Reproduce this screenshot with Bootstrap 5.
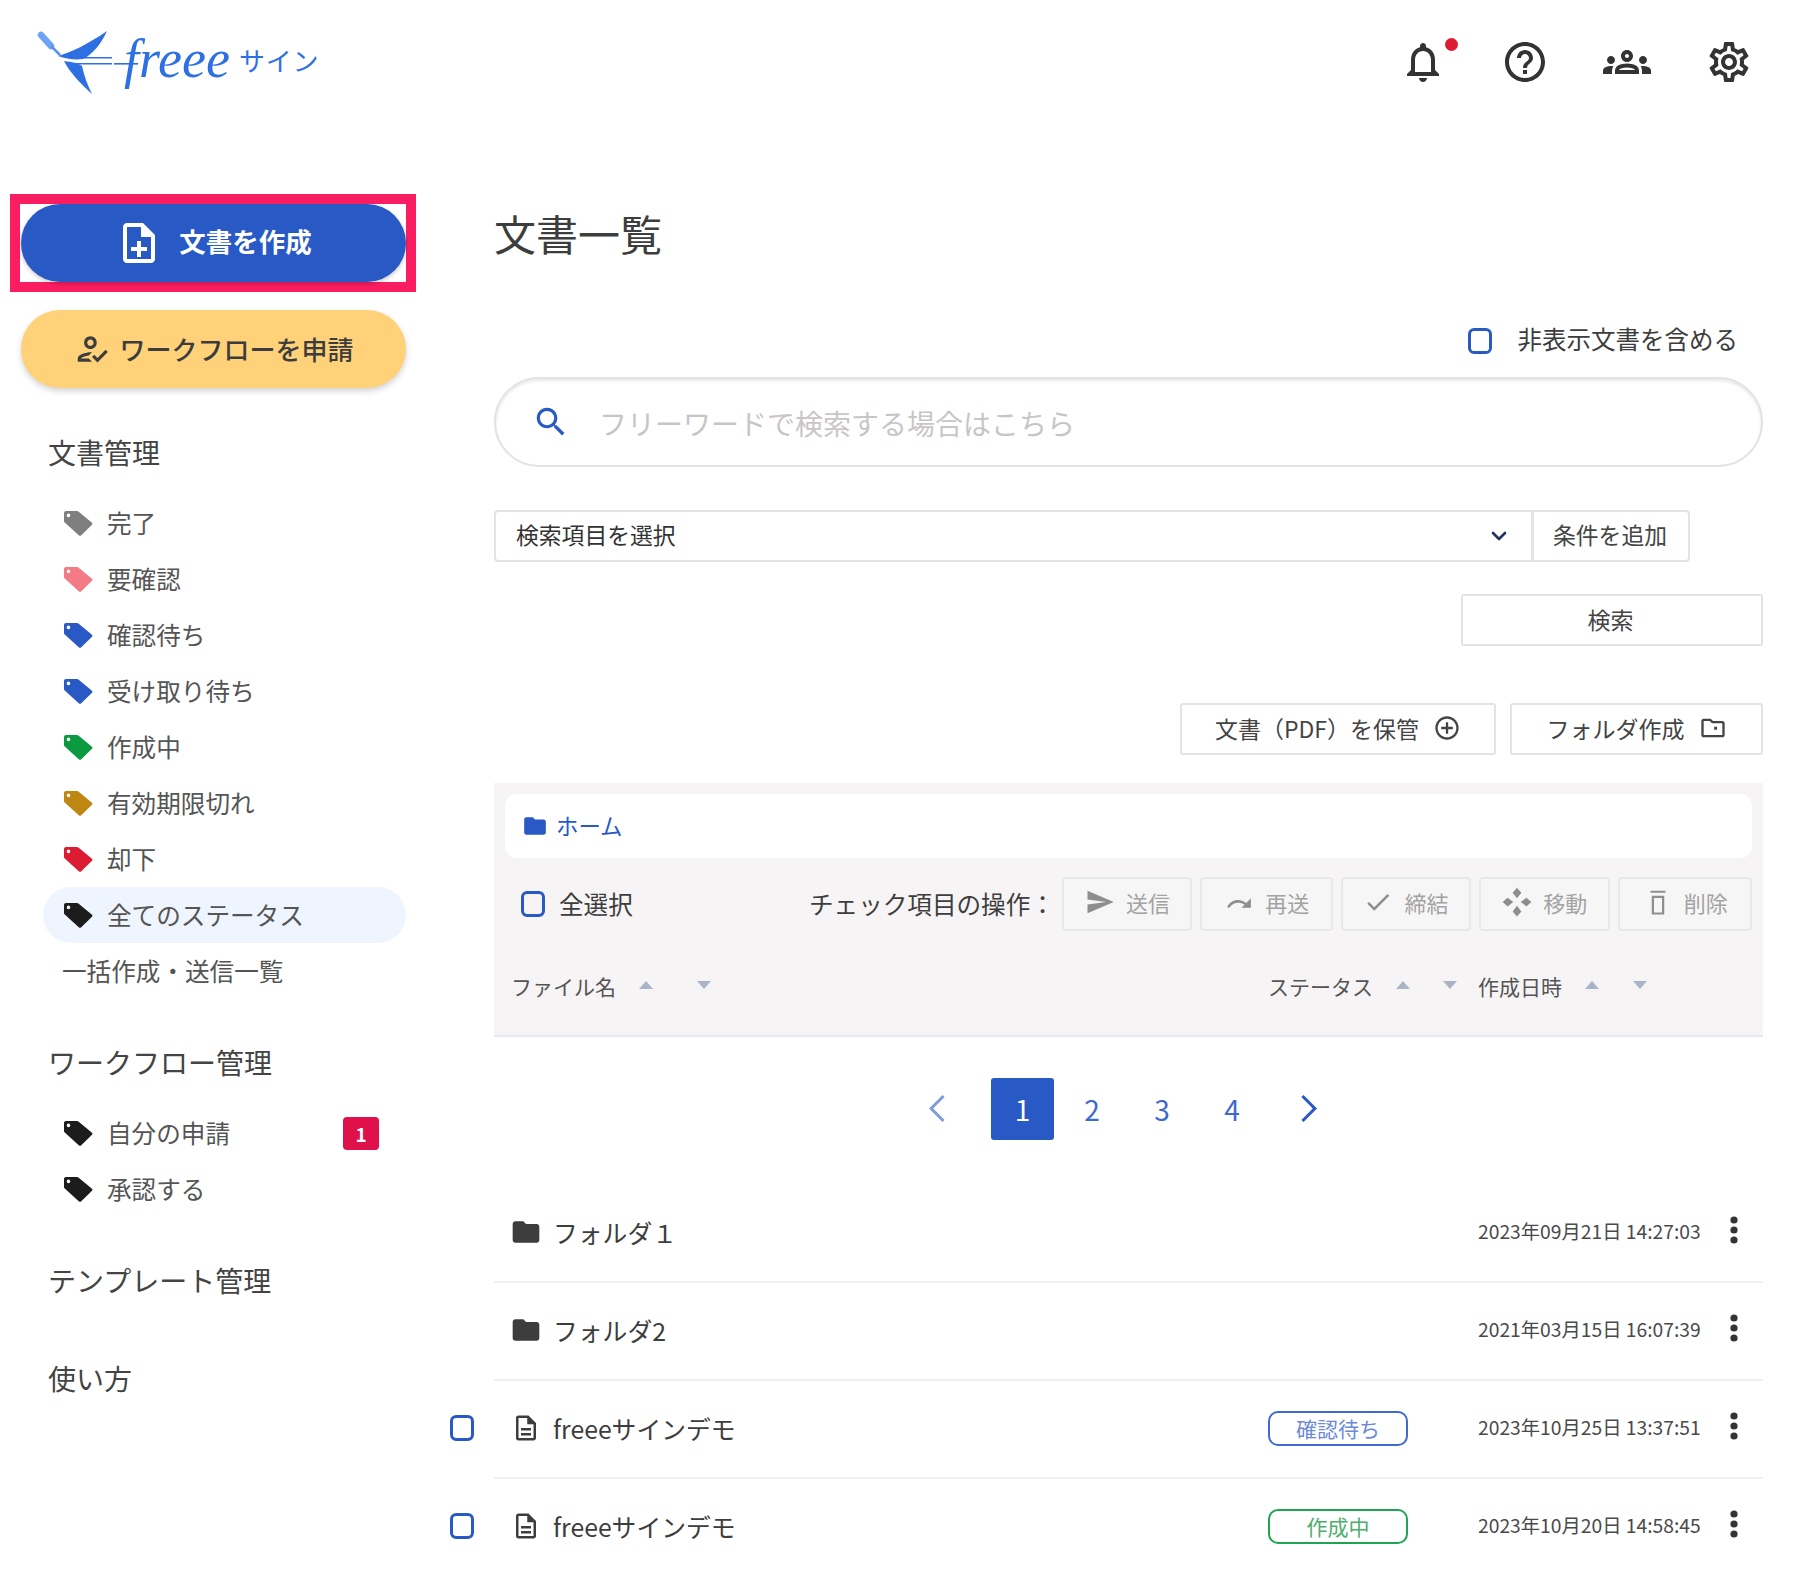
<!DOCTYPE html>
<html lang="ja">
<head>
<meta charset="utf-8">
<title>freeeサイン</title>
<link href="https://cdn.jsdelivr.net/npm/bootstrap@5.3.0/dist/css/bootstrap.min.css" rel="stylesheet">
<style>
html,body{height:1570px;overflow:hidden;background:#fff}
body{font-family:"Noto Sans CJK JP","Noto Sans",sans-serif;color:#3d3d3d;font-size:24.6px;line-height:1.4}
svg{fill:currentColor;flex-shrink:0;display:block}
.app-head{height:130px;padding:30px 53px 0 38px}
.logo-mark{width:82px;height:66px;color:#2f6fe4;overflow:visible}
.logo-free{font-family:"Liberation Serif",serif;font-style:italic;font-size:54px;color:#2f6fe4;line-height:1;margin-left:4px;margin-top:-8px}
.logo-sign{font-size:26px;color:#2f6fe4;letter-spacing:.8px;margin-left:9px;margin-top:-6px}
.head-icons{gap:54px;margin-top:8px}
.head-ico{width:48px;height:48px;color:#333}
.head-ico svg{width:48px;height:48px}
.bell-dot{top:0;right:-11px;width:13px;height:13px;background:#dc1c33}
.side{width:450px;flex-shrink:0}
.hl{margin:64px 0 0 10px;width:406px;height:98px;border:10px solid #fb1d62;background:#fff}
.cta{border:0;height:78px;font-size:26px;display:flex;align-items:center;justify-content:center}
.cta-blue{background:#2859c5;color:#fff;font-weight:700;width:385px;margin-left:1px;gap:16px;box-shadow:0 2px 4px rgba(0,0,0,.2);font-size:26.5px}
.cta-blue span{margin-bottom:4px}
.cta-blue:hover{background:#2859c5;color:#fff}
.cta-yellow{background:#ffd27a;color:#3d3d3d;width:385px;margin:18px 0 0 21px;gap:8px;font-weight:500;box-shadow:0 3px 6px rgba(0,0,0,.18)}
.cta-yellow span{margin-bottom:2px}
.cta-yellow:hover{background:#ffd27a;color:#3d3d3d}
.sec{font-size:28px;line-height:40px;margin-left:48px;color:#444;text-decoration:none;display:block}
.s1{margin-top:44px}.s2{margin-top:43px}.s3{margin-top:43px}.s4{margin-top:58px}
.side-nav{margin-left:43px;width:363px;margin-top:23px}
.side-nav.n2{margin-top:23px}
.side-nav .nav-link{height:56px;padding:0 0 2px 21px;color:#555;font-size:24.6px;display:flex;align-items:center;border-radius:28px;gap:14px}
.side-nav .nav-link.active{background:#eff5fe;color:#555}
.side-nav .plain{padding-left:19px}
.tag{width:29px;height:25px;margin-top:2px}
.c-grey{color:#7f7f7f}.c-pink{color:#f47a85}.c-blue{color:#2859c5}.c-green{color:#0b9a40}.c-gold{color:#bd8712}.c-red{color:#dc1c33}.c-black{color:#1c1c1c}
.cnt{width:36px;height:33px;background:#e0104a;color:#fff;font-size:19px;font-weight:700;border-radius:4px;margin:2px 27px 0 auto;padding:0;display:flex;align-items:center;justify-content:center}
.main{width:1313px;flex-shrink:0}
.in{margin-left:44px}
.ttl{font-size:42px;line-height:60px;font-weight:400;margin:73px 0 0;color:#3d3d3d}
.hide-row{margin-top:63px;height:30px;padding-right:25px;gap:26px;line-height:30px;font-size:24.5px}
.hide-row span{margin-bottom:4px}
.cb{width:24px;height:26px;margin:0;border:3px solid #2859c5;border-radius:3px;background:transparent;flex-shrink:0}
.search{margin-top:21px;height:90px;border:2px solid #e3e3e3;box-shadow:inset 0 2px 3px rgba(0,0,0,.09);padding-left:36px;gap:29px;color:#2859c5}
.search svg{width:38px;height:38px}
.search .form-control{border:0;box-shadow:none;background:transparent;font-size:28px;padding:1px 0 0;height:60px}
.search .form-control::placeholder{color:#c9c5c5}
.pick{margin-top:43px;width:1196px;height:52px}
.pick .form-select{font-size:22.8px;color:#333;border:2px solid #e3e3e3;height:52px;padding:0 0 2px 20px;background-image:url("data:image/svg+xml,%3csvg xmlns='http://www.w3.org/2000/svg' viewBox='0 0 16 16'%3e%3cpath fill='none' stroke='%231f3560' stroke-linecap='round' stroke-linejoin='round' stroke-width='2.600' d='m2 5 6 6 6-6'/%3e%3c/svg%3e");background-position:right 22px center;background-size:20px 16px;border-radius:4px 0 0 4px;line-height:46px}
.pick .btn{width:158px;font-size:22.8px;border:2px solid #e3e3e3;color:#444;border-radius:0 4px 4px 0;margin-left:-2px;padding:0 2px 2px 0}
.wbtn{height:52px;border:2px solid #e3e3e3;border-radius:3px;font-size:23px;color:#444;padding:0 0 2px;display:flex;align-items:center;justify-content:center;background:#fff}
.w-search{width:302px;margin:32px 0 0 auto;padding-right:3px}
.tools{margin-top:57px;gap:14px}
.w-pdf{width:316px;gap:14px}.w-folder{width:253px;gap:14px}
.wbtn svg{width:28px;height:28px}
.panel{margin-top:28px;height:254px;background:#f6f4f5;border-bottom:2px solid #e6eaee;padding:11px 11px 0 11px}
.crumb{height:64px;background:#fff;border-radius:12px;padding-left:17px;gap:8px;color:#2859c5;font-size:22.4px}
.crumb span{margin-bottom:1px}
.crumb svg{width:26px;height:26px}
.ops{margin-top:19px;height:54px;padding-left:16px}
.ops .lbl{margin-left:14px;margin-bottom:2px}
.ops .hint{margin-left:auto;margin-right:7.500px;margin-bottom:2px}
.act{height:54px;border:2px solid #e9e8e8;border-radius:4px;color:#a3a3a3;font-size:22px;display:flex;align-items:center;justify-content:center;gap:11px;padding:0 0 4px;background:#f7f6f6}
.act:nth-child(1),.act:nth-child(3){flex:0 0 130px}
.act:nth-child(2){flex:0 0 132.500px}
.act:nth-child(4){flex:0 0 131.500px}
.act:nth-child(5){flex:0 0 133.600px}
.act svg{width:30px;height:30px;color:#8e8e8e}
.act-set{gap:8px}
.cols{display:grid;grid-template-columns:757px 210px 1fr;margin-top:36px;height:40px;align-items:center;padding-left:6px;font-size:21px;color:#555}
.tri-u,.tri-d{width:0;height:0;border-left:7px solid transparent;border-right:7px solid transparent;flex-shrink:0;margin-top:-3px}
.tri-u{border-bottom:8px solid #a9b5c7}
.tri-d{border-top:8px solid #a9b5c7}
.gap-a{margin-left:23px}.gap-b{margin-left:44px}.gap-c{margin-left:33px}.gap-d{margin-left:34px}
.pager{margin:41px 0 0 412px;height:62px}
.pager .page-link{width:63px;height:62px;border:0;background:transparent;color:#3f69cc;font-size:28px;padding:2px 0 0;display:flex;align-items:center;justify-content:center;border-radius:3px!important}
.pager .active .page-link{background:#2859c5;color:#fff}
.pager svg{width:36px;height:36px}
.pg-1{margin-right:23px}.pg-2{margin-right:7.500px}.pg-3{margin-right:8px}.pg-5{margin-left:14px}
.list{margin-top:45px}
.li-row{height:98px}
.chk{width:44px;flex-shrink:0;margin-top:-4px}
.body{flex-grow:1;height:98px;border-bottom:2px solid #edf0f4;padding-left:18px;display:grid;grid-template-columns:756px 210px 222px 1fr;align-items:center}
.nm{gap:12px;font-size:24.8px;color:#3d3d3d;margin-bottom:2px}
.nm svg{width:28px;height:28px}
.nm .ic-folder{width:32px;height:32px;margin-left:-2px;margin-right:-1px}
.nm .ic-doc{width:30px;height:30px;margin-left:-1px}
.st-cell{margin-bottom:2px}
.st{width:140px;height:35px;border:2px solid;border-radius:10px;background:#fff;font-size:21px;font-weight:400;padding:0;display:flex;align-items:center;justify-content:center;line-height:1}
.st-blue{color:#6c8ad8;border-color:#3f6ad2}
.st-green{color:#4fae6c;border-color:#1fa552}
.dt{font-size:19.3px;color:#4a4a4a;white-space:nowrap;margin-bottom:2px}
.keb{width:24px;height:30px;margin-left:22px;margin-top:-6px;color:#333}
</style>
</head>
<body>
<header class="app-head d-flex justify-content-between align-items-start">
  <a href="#" class="d-flex align-items-center text-decoration-none">
    <svg class="logo-mark" viewBox="0 0 82 66" aria-hidden="true">
      <path d="M3 5l10 11" stroke="#6ea3f7" stroke-width="6.500" stroke-linecap="round" fill="none"/>
      <path d="M13 16l9 9" stroke="#5b8ff0" stroke-width="2.500" fill="none"/>
      <path d="M20 26C34 22 50 14 69 1 63 14 55 24 45 29 37 30 28 29 20 26z"/>
      <path d="M26 31c8 1 14 2 18 5 2 9 5 18 10 28C44 55 32 43 26 31z"/>
      <path d="M36 27h38v1.600H38zM38 33h36v1.600H38z"/>
      <path d="M76 33h24v1.600H76z"/>
    </svg>
    <span class="logo-free">freee</span>
    <span class="logo-sign">サイン</span>
  </a>
  <div class="d-flex head-icons">
    <div class="head-ico position-relative">
      <svg viewBox="0 0 24 24"><path d="M12 22c1.100 0 2-.9 2-2h-4c0 1.100.9 2 2 2zm6-6v-5c0-3.070-1.630-5.640-4.500-6.320V4c0-.83-.67-1.500-1.500-1.500s-1.500.67-1.500 1.500v.68C7.640 5.360 6 7.920 6 11v5l-2 2v1h16v-1l-2-2zm-2 1H8v-6c0-2.480 1.510-4.500 4-4.500s4 2.020 4 4.500v6z"/></svg>
      <span class="bell-dot position-absolute rounded-circle"></span>
    </div>
    <div class="head-ico"><svg viewBox="0 0 24 24"><path d="M11 18h2v-2h-2v2zm1-16C6.480 2 2 6.480 2 12s4.480 10 10 10 10-4.480 10-10S17.520 2 12 2zm0 18c-4.410 0-8-3.590-8-8s3.590-8 8-8 8 3.590 8 8-3.590 8-8 8zm0-14c-2.210 0-4 1.790-4 4h2c0-1.100.9-2 2-2s2 .9 2 2c0 2-3 1.750-3 5h2c0-2.250 3-2.500 3-5 0-2.210-1.790-4-4-4z"/></svg></div>
    <div class="head-ico"><svg viewBox="0 0 24 24"><path d="M4 13c1.100 0 2-.9 2-2s-.9-2-2-2-2 .9-2 2 .9 2 2 2zm1.130 1.100c-.37-.06-.74-.1-1.130-.1-.99 0-1.930.21-2.780.58C.48 14.900 0 15.620 0 16.430V18h4.500v-1.610c0-.83.23-1.610.63-2.290zM20 13c1.100 0 2-.9 2-2s-.9-2-2-2-2 .9-2 2 .9 2 2 2zm4 3.430c0-.81-.48-1.530-1.220-1.850-.85-.37-1.790-.58-2.780-.58-.39 0-.76.04-1.130.1.4.68.63 1.460.63 2.290V18H24v-1.570zm-7.760-2.780c-1.170-.52-2.610-.9-4.240-.9-1.630 0-3.070.39-4.240.9C6.680 14.130 6 15.210 6 16.390V18h12v-1.610c0-1.180-.68-2.260-1.760-2.740zM8.070 16c.09-.23.13-.39.91-.69.97-.38 1.990-.56 3.020-.56s2.050.18 3.020.56c.77.3.81.46.91.69H8.070zM12 8c.55 0 1 .45 1 1s-.45 1-1 1-1-.45-1-1 .45-1 1-1m0-2c-1.660 0-3 1.340-3 3s1.340 3 3 3 3-1.340 3-3-1.340-3-3-3z"/></svg></div>
    <div class="head-ico"><svg viewBox="0 0 24 24"><path d="M19.430 12.980c.04-.32.07-.64.07-.98 0-.34-.03-.66-.07-.98l2.110-1.650c.19-.15.24-.42.12-.64l-2-3.460c-.09-.16-.26-.25-.44-.25-.06 0-.12.01-.17.03l-2.490 1c-.52-.4-1.080-.73-1.690-.98l-.38-2.650C14.460 2.180 14.250 2 14 2h-4c-.25 0-.46.18-.49.42l-.38 2.650c-.61.25-1.170.59-1.690.98l-2.490-1c-.06-.02-.12-.03-.18-.03-.17 0-.34.09-.43.25l-2 3.460c-.13.22-.07.49.12.64l2.110 1.650c-.04.32-.07.65-.07.98 0 .33.03.66.07.98l-2.110 1.650c-.19.15-.24.42-.12.64l2 3.460c.09.16.26.25.44.25.06 0 .12-.01.17-.03l2.490-1c.52.4 1.080.73 1.690.98l.38 2.650c.03.24.24.42.49.42h4c.25 0 .46-.18.49-.42l.38-2.650c.61-.25 1.170-.59 1.690-.98l2.490 1c.06.02.12.03.18.03.17 0 .34-.09.43-.25l2-3.460c.12-.22.07-.49-.12-.64l-2.110-1.650zm-1.980-1.710c.04.31.05.52.05.73 0 .21-.02.43-.05.73l-.14 1.130.89.7 1.080.84-.7 1.210-1.270-.51-1.040-.42-.9.68c-.43.32-.84.56-1.250.73l-1.060.43-.16 1.130-.2 1.350h-1.400l-.19-1.350-.16-1.130-1.060-.43c-.43-.18-.83-.41-1.230-.71l-.91-.7-1.060.43-1.270.51-.7-1.210 1.080-.84.89-.7-.14-1.130c-.03-.31-.05-.54-.05-.74s.02-.43.05-.73l.14-1.130-.89-.7-1.080-.84.7-1.210 1.270.51 1.040.42.9-.68c.43-.32.84-.56 1.250-.73l1.060-.43.16-1.130.2-1.350h1.390l.19 1.350.16 1.130 1.060.43c.43.18.83.41 1.230.71l.91.7 1.060-.43 1.270-.51.7 1.210-1.070.85-.89.7.14 1.130zM12 8c-2.210 0-4 1.790-4 4s1.790 4 4 4 4-1.790 4-4-1.790-4-4-4zm0 6c-1.100 0-2-.9-2-2s.9-2 2-2 2 .9 2 2-.9 2-2 2z"/></svg></div>
  </div>
</header>

<svg width="0" height="0" class="position-absolute"><defs>
  <symbol id="tag" viewBox="0 0 29 25"><path fill-rule="evenodd" d="M2 0h11c.6 0 1 .2 1.400.6L28 11.800c.6.600.6 1.400 0 2L17 24.400c-.6.600-1.400.6-2 0L.8 11.600C.3 11.200 0 10.700 0 10V2C0 .9.900 0 2 0zm2.500 2.600a1.800 1.800 0 1 0 0 3.600 1.800 1.800 0 0 0 0-3.600z"/></symbol>
</defs></svg>

<div class="d-flex">
  <aside class="side">
    <div class="hl">
      <button type="button" class="btn rounded-pill cta cta-blue">
        <svg width="48" height="48" viewBox="0 0 24 24"><path d="M13 11h-2v3H8v2h3v3h2v-3h3v-2h-3zm1-9H6c-1.100 0-2 .9-2 2v16c0 1.100.89 2 1.990 2H18c1.100 0 2-.9 2-2V8l-6-6zm4 18H6V4h7v5h5v11z"/></svg>
        <span>文書を作成</span>
      </button>
    </div>
    <button type="button" class="btn rounded-pill cta cta-yellow">
      <svg width="38" height="38" viewBox="0 0 24 24"><path d="M11 12c2.210 0 4-1.790 4-4s-1.790-4-4-4-4 1.790-4 4 1.790 4 4 4zm0-6c1.100 0 2 .9 2 2s-.9 2-2 2-2-.9-2-2 .9-2 2-2zM5 18c.2-.63 2.570-1.680 4.960-1.940l2.040-2c-.39-.04-.68-.06-1-.06-2.670 0-8 1.340-8 4v2h9l-2-2H5zm15.600-5.500l-5.130 5.170-2.070-2.080L12 17l3.470 3.500L22 13.910z"/></svg>
      <span>ワークフローを申請</span>
    </button>

    <a href="#" class="sec s1">文書管理</a>
    <nav class="nav flex-column side-nav">
      <a class="nav-link" href="#"><svg class="tag c-grey"><use href="#tag"/></svg>完了</a>
      <a class="nav-link" href="#"><svg class="tag c-pink"><use href="#tag"/></svg>要確認</a>
      <a class="nav-link" href="#"><svg class="tag c-blue"><use href="#tag"/></svg>確認待ち</a>
      <a class="nav-link" href="#"><svg class="tag c-blue"><use href="#tag"/></svg>受け取り待ち</a>
      <a class="nav-link" href="#"><svg class="tag c-green"><use href="#tag"/></svg>作成中</a>
      <a class="nav-link" href="#"><svg class="tag c-gold"><use href="#tag"/></svg>有効期限切れ</a>
      <a class="nav-link" href="#"><svg class="tag c-red"><use href="#tag"/></svg>却下</a>
      <a class="nav-link active" href="#"><svg class="tag c-black"><use href="#tag"/></svg>全てのステータス</a>
      <a class="nav-link plain" href="#">一括作成・送信一覧</a>
    </nav>

    <a href="#" class="sec s2">ワークフロー管理</a>
    <nav class="nav flex-column side-nav n2">
      <a class="nav-link" href="#"><svg class="tag c-black"><use href="#tag"/></svg>自分の申請<span class="badge cnt">1</span></a>
      <a class="nav-link" href="#"><svg class="tag c-black"><use href="#tag"/></svg>承認する</a>
    </nav>

    <a href="#" class="sec s3">テンプレート管理</a>
    <a href="#" class="sec s4">使い方</a>
  </aside>

  <main class="main">
    <div class="in">
      <h1 class="ttl">文書一覧</h1>
      <div class="hide-row d-flex justify-content-end align-items-center">
        <input class="form-check-input cb" type="checkbox" aria-label="非表示文書を含める">
        <span>非表示文書を含める</span>
      </div>
      <div class="search d-flex align-items-center rounded-pill">
        <svg viewBox="0 0 24 24"><path d="M15.500 14h-.79l-.28-.27C15.410 12.590 16 11.110 16 9.500 16 5.910 13.090 3 9.500 3S3 5.910 3 9.500 5.910 16 9.500 16c1.610 0 3.090-.59 4.230-1.570l.27.28v.79l5 4.990L20.490 19l-4.990-5zm-6 0C7.010 14 5 11.990 5 9.500S7.010 5 9.500 5 14 7.010 14 9.500 11.990 14 9.500 14z"/></svg>
        <input class="form-control" type="text" placeholder="フリーワードで検索する場合はこちら">
      </div>
      <div class="input-group pick">
        <select class="form-select"><option>検索項目を選択</option></select>
        <button type="button" class="btn">条件を追加</button>
      </div>
      <button type="button" class="btn wbtn w-search">検索</button>
      <div class="tools d-flex justify-content-end">
        <button type="button" class="btn wbtn w-pdf">文書（PDF）を保管
          <svg viewBox="0 0 24 24"><path d="M13 7h-2v4H7v2h4v4h2v-4h4v-2h-4V7zm-1-5C6.480 2 2 6.480 2 12s4.480 10 10 10 10-4.480 10-10S17.520 2 12 2zm0 18c-4.410 0-8-3.590-8-8s3.590-8 8-8 8 3.590 8 8-3.590 8-8 8z"/></svg>
        </button>
        <button type="button" class="btn wbtn w-folder">フォルダ作成
          <svg viewBox="0 0 24 24"><path d="M20 6h-8l-2-2H4c-1.100 0-2 .9-2 2v12c0 1.100.9 2 2 2h16c1.100 0 2-.9 2-2V8c0-1.100-.9-2-2-2zm0 12H4V6h5.170l2 2H20v10zM13 11h2.500v2.500H13z"/></svg>
        </button>
      </div>

      <section class="panel">
        <div class="crumb d-flex align-items-center">
          <svg viewBox="0 0 24 24"><path d="M10 4H4c-1.100 0-1.990.9-1.990 2L2 18c0 1.100.9 2 2 2h16c1.100 0 2-.9 2-2V8c0-1.100-.9-2-2-2h-8l-2-2z"/></svg>
          <span>ホーム</span>
        </div>
        <div class="ops d-flex align-items-center">
          <input class="form-check-input cb" type="checkbox" aria-label="全選択">
          <span class="lbl">全選択</span>
          <span class="hint">チェック項目の操作：</span>
          <div class="d-flex act-set">
            <button type="button" class="btn act"><svg viewBox="0 0 24 24"><path d="M2.010 21L23 12 2.010 3 2 10l15 2-15 2z"/></svg>送信</button>
            <button type="button" class="btn act"><svg viewBox="0 0 24 24"><path d="M2.500 16C6 9.500 12.500 9 18 13l-1.200 1.400C12.500 11.500 7.500 12 4 16.800z"/><path d="M21.500 9v7.500H14z"/></svg>再送</button>
            <button type="button" class="btn act"><svg viewBox="0 0 24 24"><path d="M9 16.170L4.830 12l-1.420 1.410L9 19 21 7l-1.410-1.410z"/></svg>締結</button>
            <button type="button" class="btn act"><svg viewBox="0 0 24 24"><path d="M12 .5l3.500 4-3.500 4.500-3.500-4.500zM12 15l3.500 4.500-3.500 4-3.500-4zM.5 12l4-3.500L9 12l-4.500 3.500zM15 12l4.500-3.500 4 3.500-4 3.500z"/></svg>移動</button>
            <button type="button" class="btn act"><svg viewBox="0 0 24 24"><path d="M6 3h12v1.500H6zM7 7h10v15H7zm1.800 1.700v11.600h6.400V8.700z" fill-rule="evenodd"/></svg>削除</button>
          </div>
        </div>
        <div class="cols">
          <div class="d-flex align-items-center"><span>ファイル名</span><i class="tri-u gap-a"></i><i class="tri-d gap-b"></i></div>
          <div class="d-flex align-items-center"><span>ステータス</span><i class="tri-u gap-a"></i><i class="tri-d gap-c"></i></div>
          <div class="d-flex align-items-center"><span>作成日時</span><i class="tri-u gap-a"></i><i class="tri-d gap-d"></i></div>
        </div>
      </section>

      <nav aria-label="ページ">
        <ul class="pagination pager">
          <li class="page-item pg-1"><a class="page-link" href="#" aria-label="前へ"><svg viewBox="0 0 24 24" style="color:#7f9bdc"><path d="M15.410 4.410L14 3l-9 9 9 9 1.410-1.410L7.830 12z" transform="translate(1 -1)"/></svg></a></li>
          <li class="page-item active pg-2"><a class="page-link" href="#">1</a></li>
          <li class="page-item pg-3"><a class="page-link" href="#">2</a></li>
          <li class="page-item pg-3"><a class="page-link" href="#">3</a></li>
          <li class="page-item"><a class="page-link" href="#">4</a></li>
          <li class="page-item pg-5"><a class="page-link" href="#" aria-label="次へ"><svg viewBox="0 0 24 24" style="color:#2859c5"><path d="M8.590 4.410L10 3l9 9-9 9-1.410-1.410L16.170 12z" transform="translate(-1 -1)"/></svg></a></li>
        </ul>
      </nav>
    </div>

    <div class="list">
      <div class="li-row d-flex align-items-center">
        <div class="chk"></div>
        <div class="body">
          <div class="nm d-flex align-items-center"><svg class="ic-folder" viewBox="0 0 24 24"><path d="M10 4H4c-1.100 0-1.990.9-1.990 2L2 18c0 1.100.9 2 2 2h16c1.100 0 2-.9 2-2V8c0-1.100-.9-2-2-2h-8l-2-2z"/></svg><span>フォルダ１</span></div>
          <div></div>
          <div class="dt">2023年09月21日 14:27:03</div>
          <svg class="keb" viewBox="0 0 24 30"><circle cx="12" cy="5" r="3.600"/><circle cx="12" cy="15" r="3.600"/><circle cx="12" cy="25" r="3.600"/></svg>
        </div>
      </div>
      <div class="li-row d-flex align-items-center">
        <div class="chk"></div>
        <div class="body">
          <div class="nm d-flex align-items-center"><svg class="ic-folder" viewBox="0 0 24 24"><path d="M10 4H4c-1.100 0-1.990.9-1.990 2L2 18c0 1.100.9 2 2 2h16c1.100 0 2-.9 2-2V8c0-1.100-.9-2-2-2h-8l-2-2z"/></svg><span>フォルダ2</span></div>
          <div></div>
          <div class="dt">2021年03月15日 16:07:39</div>
          <svg class="keb" viewBox="0 0 24 30"><circle cx="12" cy="5" r="3.600"/><circle cx="12" cy="15" r="3.600"/><circle cx="12" cy="25" r="3.600"/></svg>
        </div>
      </div>
      <div class="li-row d-flex align-items-center">
        <div class="chk"><input class="form-check-input cb d-block" type="checkbox" aria-label="選択"></div>
        <div class="body">
          <div class="nm d-flex align-items-center"><svg class="ic-doc" viewBox="0 0 24 24"><path d="M8 16h8v2H8zm0-4h8v2H8zm6-10H6c-1.100 0-2 .9-2 2v16c0 1.100.89 2 1.990 2H18c1.100 0 2-.9 2-2V8l-6-6zm4 18H6V4h7v5h5v11z"/></svg><span>freeeサインデモ</span></div>
          <div class="st-cell"><span class="badge st st-blue">確認待ち</span></div>
          <div class="dt">2023年10月25日 13:37:51</div>
          <svg class="keb" viewBox="0 0 24 30"><circle cx="12" cy="5" r="3.600"/><circle cx="12" cy="15" r="3.600"/><circle cx="12" cy="25" r="3.600"/></svg>
        </div>
      </div>
      <div class="li-row d-flex align-items-center">
        <div class="chk"><input class="form-check-input cb d-block" type="checkbox" aria-label="選択"></div>
        <div class="body">
          <div class="nm d-flex align-items-center"><svg class="ic-doc" viewBox="0 0 24 24"><path d="M8 16h8v2H8zm0-4h8v2H8zm6-10H6c-1.100 0-2 .9-2 2v16c0 1.100.89 2 1.990 2H18c1.100 0 2-.9 2-2V8l-6-6zm4 18H6V4h7v5h5v11z"/></svg><span>freeeサインデモ</span></div>
          <div class="st-cell"><span class="badge st st-green">作成中</span></div>
          <div class="dt">2023年10月20日 14:58:45</div>
          <svg class="keb" viewBox="0 0 24 30"><circle cx="12" cy="5" r="3.600"/><circle cx="12" cy="15" r="3.600"/><circle cx="12" cy="25" r="3.600"/></svg>
        </div>
      </div>
    </div>
  </main>
</div>
<script src="https://cdn.jsdelivr.net/npm/bootstrap@5.3.0/dist/js/bootstrap.bundle.min.js"></script>
</body>
</html>
